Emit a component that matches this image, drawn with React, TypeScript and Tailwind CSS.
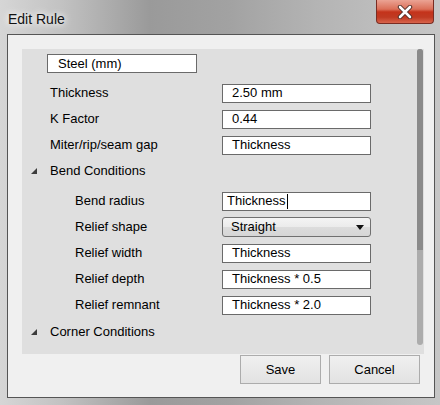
import type { ReactNode } from 'react';

const font = { fontFamily: '"Liberation Sans", Arial, sans-serif' };

function Tri() {
  return (
    <svg width="6" height="6" viewBox="0 0 6 6" className="shrink-0">
      <polygon points="6,0 6,6 0,6" fill="#3c3c3c" />
    </svg>
  );
}

function Field({ children, caret }: { children: ReactNode; caret?: boolean }) {
  return (
    <div
      className={`flex h-[19px] w-[149px] items-center border border-[#6a6a6a] bg-white text-[13px] text-black ${
        caret ? 'pl-[4px]' : 'pl-[9px]'
      }`}
    >
      {children}
      {caret && <span className="ml-[1px] h-[15px] w-px bg-black" />}
    </div>
  );
}

function Row({ label, indent, children }: { label: string; indent?: boolean; children: ReactNode }) {
  return (
    <div className={`flex h-[26px] items-center ${indent ? 'pl-[53px]' : 'pl-[28px]'}`}>
      <span className={`text-[13px] text-black ${indent ? 'w-[147px]' : 'w-[172px]'}`}>{label}</span>
      {children}
    </div>
  );
}

function Header({ label, className }: { label: string; className?: string }) {
  return (
    <div className={`flex h-[26px] items-center gap-[13px] pl-[9px] ${className ?? ''}`}>
      <Tri />
      <span className="text-[13px] text-black">{label}</span>
    </div>
  );
}

export default function App() {
  return (
    <div
      style={font}
      className="flex h-[405px] w-[440px] flex-col overflow-hidden bg-[linear-gradient(90deg,#d6d6d6_0%,#c2c2c2_14%,#9a9a9a_34%,#a2a2a2_52%,#b4b4b4_72%,#c6c6c6_100%)]"
    >
      {/* title bar */}
      <div className="flex h-[34px] shrink-0 items-start justify-between">
        <span className="mt-[9px] pl-[8px] text-[14px] text-[#111] [text-shadow:0_0_6px_#fff,0_0_10px_#fff]">
          Edit Rule
        </span>
        <div className="mr-[6px] flex h-[24px] w-[58px] items-center justify-center rounded-b-[4px] border border-t-0 border-[#7a2c22] bg-[linear-gradient(180deg,#eba394_0%,#db6f58_40%,#c4331b_52%,#c03a22_75%,#d8644c_100%)]">
          <svg width="16" height="14" viewBox="0 0 16 14">
            <path d="M3 2 L13 12 M13 2 L3 12" stroke="#4a2a24" strokeWidth="4.4" strokeLinecap="round" />
            <path d="M3 2 L13 12 M13 2 L3 12" stroke="#fff" strokeWidth="2.6" strokeLinecap="round" />
          </svg>
        </div>
      </div>

      {/* client area */}
      <div className="ml-[7px] mr-[5px] flex h-[364px] shrink-0 flex-col border border-[#555] bg-[#f0f0f0] pl-[14px] pr-[10px] pt-[14px]">
        <div className="flex h-[305px] bg-[#dfdfdf]">
          <div className="flex flex-1 flex-col pt-[5px]">
            <div className="ml-[25px] flex h-[19px] w-[150px] items-center border border-[#6a6a6a] bg-white pl-[10px] text-[13px] text-black">
              Steel (mm)
            </div>
            <div className="mt-[7px] flex flex-col">
              <Row label="Thickness">
                <Field>2.50 mm</Field>
              </Row>
              <Row label="K Factor">
                <Field>0.44</Field>
              </Row>
              <Row label="Miter/rip/seam gap">
                <Field>Thickness</Field>
              </Row>
              <Header label="Bend Conditions" className="mb-[4px]" />
              <Row label="Bend radius" indent>
                <Field caret>Thickness</Field>
              </Row>
              <Row label="Relief shape" indent>
                <div className="flex h-[20px] w-[149px] items-center justify-between rounded-[3px] border border-[#707070] bg-[linear-gradient(180deg,#f4f4f4_0%,#ebebeb_50%,#dcdcdc_51%,#d6d6d6_100%)] pl-[8px] pr-[6px] text-[13px] text-black">
                  Straight
                  <svg width="8" height="5" viewBox="0 0 8 5">
                    <polygon points="0,0 8,0 4,5" fill="#111" />
                  </svg>
                </div>
              </Row>
              <Row label="Relief width" indent>
                <Field>Thickness</Field>
              </Row>
              <Row label="Relief depth" indent>
                <Field>Thickness * 0.5</Field>
              </Row>
              <Row label="Relief remnant" indent>
                <Field>Thickness * 2.0</Field>
              </Row>
              <Header label="Corner Conditions" className="mt-[1px]" />
            </div>
          </div>
          <div className="mr-[1px] flex h-[296px] w-[6px] flex-col overflow-hidden rounded-[3px] bg-[#acacac]">
            <div className="h-[201px] bg-[#8a8a8a]" />
          </div>
        </div>

        <div className="mt-[1px] flex justify-end gap-[8px] pr-[4px]">
          <button className="h-[29px] w-[81px] border border-[#acacac] bg-[linear-gradient(180deg,#f0f0f0,#e2e2e2)] text-[13px] text-black">
            Save
          </button>
          <button className="h-[29px] w-[91px] border border-[#acacac] bg-[linear-gradient(180deg,#f0f0f0,#e2e2e2)] text-[13px] text-black">
            Cancel
          </button>
        </div>
      </div>
    </div>
  );
}
